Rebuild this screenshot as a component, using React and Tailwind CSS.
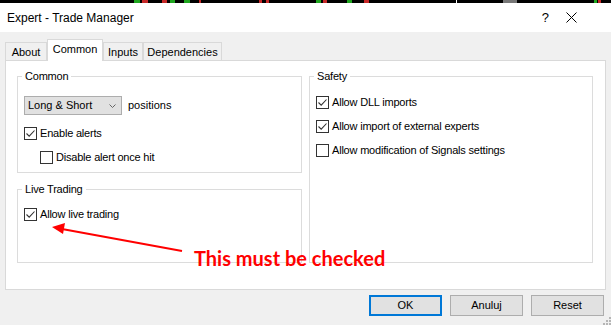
import React from "react";

const ui = { fontFamily: '"Liberation Sans", Arial, sans-serif' };

const Check = ({ checked, label, className = "" }) => (
  <div className={`flex h-[13px] items-center ${className}`}>
    <span className="flex h-[13px] w-[13px] shrink-0 items-center justify-center border border-[#333333] bg-white">
      {checked && (
        <svg width="11" height="11" viewBox="0 0 11 11">
          <path d="M1.5 5.5 L4.2 8.2 L9.5 2.5" fill="none" stroke="#333333" strokeWidth="1.1" />
        </svg>
      )}
    </span>
    <span className="ml-[3px] text-[11px] leading-[13px] tracking-[-0.2px] text-black">{label}</span>
  </div>
);

const Group = ({ title, className = "", children }) => (
  <fieldset className={`border border-[#dcdcdc] px-[6px] ${className}`}>
    <legend className="-ml-[2px] px-[3px] text-[11px] leading-[13px] tracking-[-0.2px] text-black">{title}</legend>
    {children}
  </fieldset>
);

const Tab = ({ label, active, w }) =>
  active ? (
    <div className={`${w} -mb-px flex h-[22px] items-start justify-center border border-b-0 border-[#d9d9d9] bg-white pt-[3px] text-[11px] leading-[13px]`}>
      {label}
    </div>
  ) : (
    <div className={`${w} flex h-[18px] items-start justify-center border border-b-0 border-[#d9d9d9] bg-[#f0f0f0] pt-[3px] text-[11px] leading-[13px]`}>
      {label}
    </div>
  );

const Button = ({ label, primary }) => (
  <button
    className={`flex h-[21px] w-[73px] items-center justify-center bg-[#e1e1e1] text-[11px] text-black ${
      primary ? "border-2 border-[#0078d7]" : "border border-[#adadad]"
    }`}
  >
    {label}
  </button>
);

export default function App() {
  return (
    <div className="relative h-[325px] w-[611px] overflow-hidden bg-[#f0f0f0]" style={ui}>
      {/* chart strip behind the dialog */}
      <svg width="611" height="3" className="block bg-black">
        <rect x="134" y="0" width="6" height="3" fill="#1fa51f" />
        <rect x="142" y="0" width="6" height="3" fill="#c62828" />
        <rect x="162" y="0" width="5" height="3" fill="#c62828" />
        <rect x="170" y="0" width="5" height="3" fill="#1fa51f" />
        <rect x="184" y="0" width="6" height="3" fill="#1fa51f" />
        <rect x="199" y="0" width="2" height="3" fill="#c62828" />
        <rect x="259" y="0" width="3" height="3" fill="#c62828" />
        <rect x="266" y="0" width="3" height="3" fill="#c62828" />
        <rect x="316" y="0" width="5" height="3" fill="#1fa51f" />
        <rect x="323" y="0" width="4" height="3" fill="#c62828" />
        <rect x="347" y="0" width="5" height="3" fill="#1fa51f" />
        <rect x="364" y="0" width="5" height="3" fill="#c62828" />
        <rect x="456" y="0" width="1" height="3" fill="#ffffff" />
        <rect x="503" y="0" width="14" height="3" fill="#777777" />
        <rect x="594" y="0" width="3" height="3" fill="#1fa51f" />
        <rect x="598" y="0" width="3" height="3" fill="#c62828" />
      </svg>

      {/* title bar */}
      <div className="flex h-[29px] items-center bg-white pl-[7px]">
        <span className="text-[12px] text-black">Expert - Trade Manager</span>
        <span className="ml-auto text-[13px] text-black">?</span>
        <svg width="11" height="11" viewBox="0 0 11 11" className="ml-[17px] mr-[34px]">
          <path d="M0.5 0.5 L10.5 10.5 M10.5 0.5 L0.5 10.5" stroke="#000" strokeWidth="1" />
        </svg>
      </div>

      {/* tabs */}
      <div className="mt-[7px] flex items-end px-[5px]">
        <Tab label="About" w="w-[42px]" />
        <Tab label="Common" w="w-[56px]" active />
        <Tab label="Inputs" w="w-[40px]" />
        <Tab label="Dependencies" w="w-[79px]" />
      </div>

      {/* panel */}
      <div className="mx-[5px] flex h-[230px] items-start gap-[7px] border border-[#d9d9d9] bg-white pl-[11px] pr-[12px] pt-[9px]">
        <div className="flex w-[285px] flex-col">
          <Group title="Common" className="h-[103px]">
            <div className="mt-[13px] flex items-center">
              <div className="flex h-[19px] w-[98px] items-center border border-[#adadad] bg-[#e1e1e1] pl-[3px] pr-[5px] text-[11px]">
                <span>Long &amp; Short</span>
                <svg width="7" height="4" viewBox="0 0 7 4" className="ml-auto">
                  <path d="M0.5 0.5 L3.5 3.5 L6.5 0.5" fill="none" stroke="#666" strokeWidth="1" />
                </svg>
              </div>
              <span className="ml-[6px] text-[11px]">positions</span>
            </div>
            <Check checked label="Enable alerts" className="mt-[12px]" />
            <Check label="Disable alert once hit" className="ml-[16px] mt-[11px]" />
          </Group>
          <Group title="Live Trading" className="mt-[10px] h-[80px]">
            <Check checked label="Allow live trading" className="mt-[12px]" />
          </Group>
        </div>
        <Group title="Safety" className="h-[193px] w-[284px]">
          <Check checked label="Allow DLL imports" className="mt-[13px]" />
          <Check checked label="Allow import of external experts" className="mt-[11px]" />
          <Check label="Allow modification of Signals settings" className="mt-[11px]" />
        </Group>
      </div>

      {/* buttons */}
      <div className="mt-[5px] flex justify-end gap-[8px] pr-[7px]">
        <Button label="OK" primary />
        <Button label="Anuluj" />
        <Button label="Reset" />
      </div>

      {/* resize grip */}
      <svg width="8" height="8" viewBox="0 0 8 8" className="absolute bottom-0 right-0">
        <rect x="6" y="0" width="2" height="2" fill="#b5b5b5" />
        <rect x="3" y="3" width="2" height="2" fill="#b5b5b5" />
        <rect x="6" y="3" width="2" height="2" fill="#b5b5b5" />
        <rect x="0" y="6" width="2" height="2" fill="#b5b5b5" />
        <rect x="3" y="6" width="2" height="2" fill="#b5b5b5" />
        <rect x="6" y="6" width="2" height="2" fill="#b5b5b5" />
      </svg>

      {/* annotation */}
      <svg width="611" height="325" className="pointer-events-none absolute left-0 top-0">
        <line x1="182" y1="251" x2="62" y2="229" stroke="#ff0000" strokeWidth="2" />
        <polygon points="52,227 65,223 63,234" fill="#ff0000" />
      </svg>
      <div
        className="absolute left-[194px] top-[246px] text-[20px] font-bold leading-[24px] text-[#ff0000]"
        style={{ fontFamily: 'Lato, "Liberation Sans", sans-serif' }}
      >
        This must be checked
      </div>
    </div>
  );
}
